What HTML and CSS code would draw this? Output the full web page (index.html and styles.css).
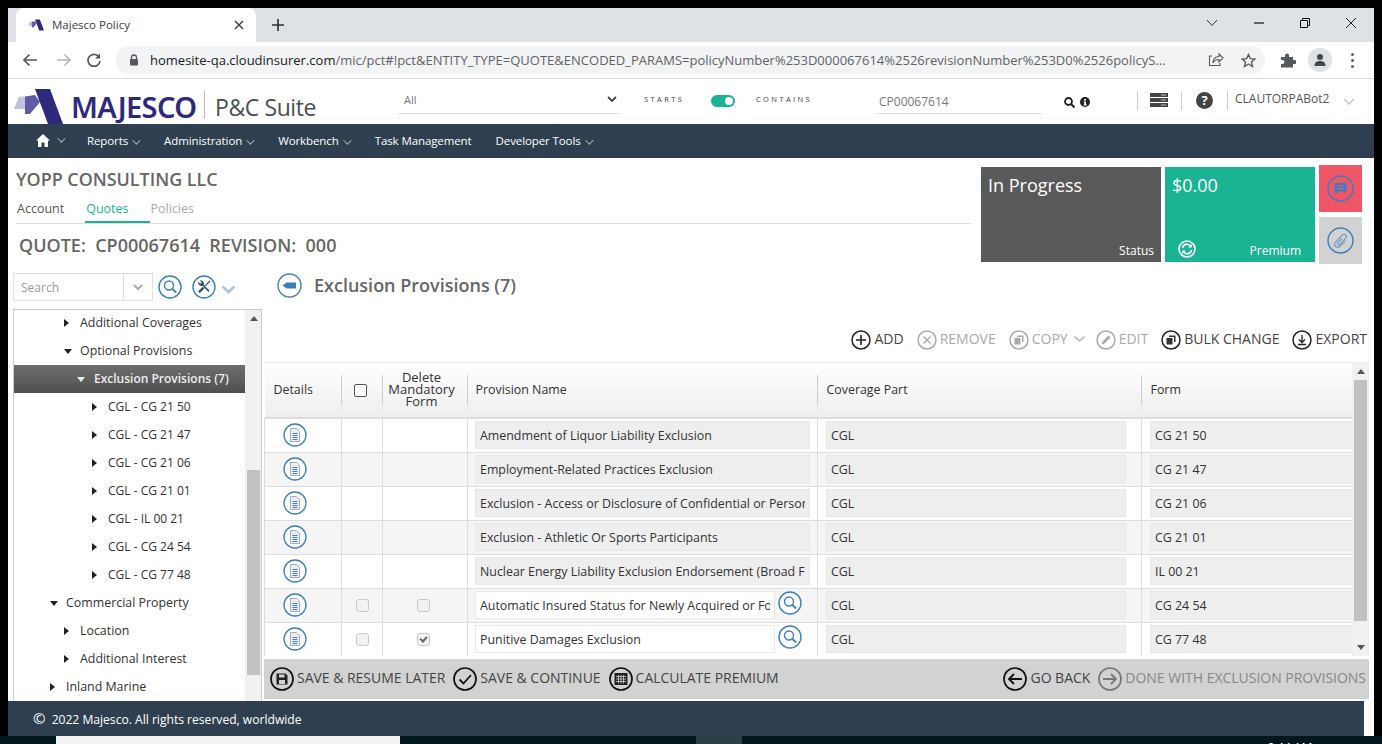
FILE: index.html
```html
<!DOCTYPE html>
<html lang="en">
<head>
  <meta charset="UTF-8" />
  <title>Majesco Policy</title>
  <link rel="stylesheet" href="styles.css">
</head>
<body>
  <svg class="sprites" width="0" height="0">
    <symbol id="mark" viewBox="0 0 50 35">
      <path d="M1 20 L6 7.5 H13 L14 20 Z" fill="#c3c1de"/>
      <path d="M12 7.5 L22 6 L27 13 L17 25 H12 Z" fill="#5f5ba6"/>
      <path d="M22 0 H37 L50 35 H35 Z" fill="#2d2a7e"/>
    </symbol>
    <symbol id="doc" viewBox="0 0 24 24">
      <circle cx="12" cy="12" r="11" fill="#fff" stroke="#3d7ebd" stroke-width="1.3"/>
      <path d="M7.5 5.5 H13.5 L16.5 8.5 V18.5 H7.5 Z" fill="#e8eef6" stroke="#a8a8c8" stroke-width="1"/>
      <path d="M9.5 10.5 H14.5 M9.5 12.5 H14.5 M9.5 14.5 H14.5 M9.5 16.5 H14.5" stroke="#4e80b8" stroke-width="1"/>
    </symbol>
    <symbol id="find" viewBox="0 0 24 24">
      <circle cx="12" cy="12" r="11" fill="#fff" stroke="#3d7ebd" stroke-width="1.4"/>
      <circle cx="11" cy="10.5" r="4.5" fill="none" stroke="#3d7ebd" stroke-width="1.4"/>
      <path d="M14.5 14 L18 17.5" stroke="#3d7ebd" stroke-width="1.8"/>
    </symbol>
  </svg>

  <div class="window">
    <div class="tabstrip">
      <div class="tab">
        <svg class="favicon" width="16" height="14"><use href="#mark"/></svg>
        <span class="tab-title">Majesco Policy</span>
        <svg class="tab-close" width="10" height="10" viewBox="0 0 10 10"><path d="M1 1 L9 9 M9 1 L1 9" stroke="#3c4043" stroke-width="1.4"/></svg>
      </div>
      <svg class="tab-new" width="12" height="12" viewBox="0 0 12 12"><path d="M6 0 V12 M0 6 H12" stroke="#2b2d30" stroke-width="1.6"/></svg>
      <div class="win-buttons">
        <svg width="12" height="8" viewBox="0 0 12 8"><path d="M1 1 L6 6.5 L11 1" fill="none" stroke="#333" stroke-width="1"/></svg>
        <svg width="12" height="2" viewBox="0 0 12 2"><path d="M1 1 H11" stroke="#111" stroke-width="1.2"/></svg>
        <svg width="10" height="10" viewBox="0 0 10 10"><path d="M0.5 2.5 H7.5 V9.5 H0.5 Z M2.5 2.5 V0.5 H9.5 V7.5 H7.5" fill="none" stroke="#111" stroke-width="1"/></svg>
        <svg width="12" height="12" viewBox="0 0 12 12"><path d="M1 1 L11 11 M11 1 L1 11" stroke="#222" stroke-width="1"/></svg>
      </div>
    </div>

    <div class="toolbar">
      <svg class="nav-ic" width="16" height="14" viewBox="0 0 16 14"><path d="M15 7 H2 M7.5 1.5 L2 7 L7.5 12.5" fill="none" stroke="#55585c" stroke-width="1.7"/></svg>
      <svg class="nav-ic" width="16" height="14" viewBox="0 0 16 14"><path d="M1 7 H14 M8.5 1.5 L14 7 L8.5 12.5" fill="none" stroke="#b4b7bb" stroke-width="1.7"/></svg>
      <svg class="nav-ic" width="14" height="14" viewBox="0 0 14 14"><path d="M12 4 A6 6 0 1 0 13 8" fill="none" stroke="#55585c" stroke-width="1.7"/><path d="M13 0.5 V5.5 H8 Z" fill="#55585c"/></svg>
      <div class="omnibox">
        <svg width="10" height="12" viewBox="0 0 10 12"><path d="M2.5 5 V3.5 A2.5 2.5 0 0 1 7.5 3.5 V5" fill="none" stroke="#55585c" stroke-width="1.3"/><rect x="1" y="5" width="8" height="6.5" rx="1" fill="#55585c"/></svg>
        <span class="url">homesite-qa.cloudinsurer.com<span class="url-dim">/mic/pct#!pct&amp;ENTITY_TYPE=QUOTE&amp;ENCODED_PARAMS=policyNumber%253D000067614%2526revisionNumber%253D0%2526policyS...</span></span>
        <svg class="share" width="16" height="14" viewBox="0 0 16 14"><path d="M11 1 L15 5 L11 9 V6.5 C8 6.5 6 7.5 5 10 C5 6 7.5 3.7 11 3.5 Z M4 3 H1.5 V12.5 H12 V10" fill="none" stroke="#55585c" stroke-width="1.1"/></svg>
        <svg width="15" height="15" viewBox="0 0 16 16"><path d="M8 1.5 L10 6 L14.8 6.4 L11.1 9.6 L12.3 14.4 L8 11.8 L3.7 14.4 L4.9 9.6 L1.2 6.4 L6 6 Z" fill="none" stroke="#55585c" stroke-width="1.4"/></svg>
      </div>
      <svg class="puzzle" width="16" height="16" viewBox="0 0 16 16"><path d="M1 5 H5 V3.5 A2 2 0 0 1 9 3.5 V5 H13 V8 H14.5 A2 2 0 0 1 14.5 12 H13 V15.5 H1 V12 H2.5 A2 2 0 0 0 2.5 8 H1 Z" fill="#55585c"/></svg>
      <div class="avatar"><svg width="14" height="14" viewBox="0 0 14 14"><circle cx="7" cy="4" r="3" fill="#44484e"/><path d="M1.5 13 C1.5 9 4 8 7 8 C10 8 12.5 9 12.5 13 Z" fill="#44484e"/></svg></div>
      <div class="kebab"><i></i><i></i><i></i></div>
    </div>

    <header class="app-head">
      <svg class="logo-mark" width="50" height="35"><use href="#mark"/></svg>
      <span class="logo-word">MAJESCO</span>
      <span class="logo-suite">P&amp;C Suite</span>
      <div class="head-select">
        <span>All</span>
        <svg width="10" height="7" viewBox="0 0 10 7"><path d="M1 1 L5 5 L9 1" fill="none" stroke="#444" stroke-width="1.8"/></svg>
      </div>
      <span class="micro micro-starts">STARTS</span>
      <span class="switch"><i></i></span>
      <span class="micro micro-contains">CONTAINS</span>
      <div class="head-search">CP00067614</div>
      <svg class="q-ic" width="11" height="11" viewBox="0 0 11 11"><circle cx="4.5" cy="4.5" r="3.5" fill="none" stroke="#222" stroke-width="1.8"/><path d="M7 7 L10.5 10.5" stroke="#222" stroke-width="2"/></svg>
      <svg class="i-ic" width="10" height="10" viewBox="0 0 10 10"><circle cx="5" cy="5" r="5" fill="#222"/><path d="M4 2 H6 V3.5 H4 Z M3.5 4.5 H6 V7.5 H6.8 V8.5 H3.5 V7.5 H4.3 V5.5 H3.5 Z" fill="#fff"/></svg>
      <span class="head-rule rule-a"></span>
      <svg class="server" width="18" height="14" viewBox="0 0 18 14"><path d="M0 0 H18 V4 H0 Z M0 5 H18 V9 H0 Z M0 10 H18 V14 H0 Z" fill="#444"/><path d="M11 2 H16 M11 7 H16 M11 12 H16" stroke="#bbb" stroke-width="1"/></svg>
      <span class="head-rule rule-b"></span>
      <span class="help">?</span>
      <span class="head-rule rule-c"></span>
      <span class="user">CLAUTORPABot2</span>
      <svg class="user-caret" width="12" height="7" viewBox="0 0 12 7"><path d="M1 1 L6 6 L11 1" fill="none" stroke="#c9c9c9" stroke-width="1.6"/></svg>
    </header>

    <nav class="main-nav">
      <svg class="home" width="14" height="13" viewBox="0 0 14 13"><path d="M7 0 L14 6.5 H12 V13 H8.5 V8.5 H5.5 V13 H2 V6.5 H0 Z" fill="#fff"/></svg>
      <span class="caret caret-home"></span>
      <a>Reports<span class="caret"></span></a>
      <a>Administration<span class="caret"></span></a>
      <a>Workbench<span class="caret"></span></a>
      <a>Task Management</a>
      <a>Developer Tools<span class="caret"></span></a>
    </nav>

    <section class="top">
      <div class="top-left">
        <div class="company">YOPP CONSULTING LLC</div>
        <div class="tabs">
          <a>Account</a>
          <a class="on">Quotes</a>
          <a class="off">Policies</a>
        </div>
        <div class="quote">QUOTE:&nbsp; CP00067614&nbsp; REVISION:&nbsp; 000</div>
      </div>
      <div class="tile tile-status">
        <div class="tile-big">In Progress</div>
        <div class="tile-foot"><span>Status</span></div>
      </div>
      <div class="tile tile-premium">
        <div class="tile-big">$0.00</div>
        <div class="tile-foot">
          <svg width="18" height="18" viewBox="0 0 18 18"><circle cx="9" cy="9" r="8" fill="none" stroke="#fff" stroke-width="1.6"/><path d="M4.5 8 A4.5 4.5 0 0 1 12.5 6 M13.5 10 A4.5 4.5 0 0 1 5.5 12" fill="none" stroke="#fff" stroke-width="1.6"/><path d="M13.8 3.8 V7.6 H10 Z M4.2 14.2 V10.4 H8 Z" fill="#fff"/></svg>
          <span>Premium</span>
        </div>
      </div>
      <div class="side-btns">
        <div class="side-btn side-red">
          <svg width="27" height="27" viewBox="0 0 27 27"><circle cx="13.5" cy="13.5" r="12.5" fill="none" stroke="#3d7ebd" stroke-width="1.4"/><path d="M7.5 8 H19.5 V16.5 H11.5 L8.5 19.5 V16.5 H7.5 Z" fill="#3d7ebd"/><path d="M10 10.7 H17 M10 13.5 H17" stroke="#ef5666" stroke-width="1.1"/></svg>
        </div>
        <div class="side-btn side-grey">
          <svg width="27" height="27" viewBox="0 0 27 27"><circle cx="13.5" cy="13.5" r="12.5" fill="none" stroke="#3d7ebd" stroke-width="1.4"/><path d="M15 11.5 L10.8 16 C9.6 17.4 11.4 19 12.6 17.8 L18.6 11.4 C20.8 8.8 17.6 5.8 15.2 8.2 L8.6 15 C5.8 18.4 10 22.4 13.2 19.2 L18.5 13.8" fill="none" stroke="#6f94c0" stroke-width="1.1"/></svg>
        </div>
      </div>
    </section>

    <section class="work">
      <aside class="side">
        <div class="side-tools">
          <div class="side-search">
            <span>Search</span>
            <svg width="10" height="7" viewBox="0 0 10 7"><path d="M1 1 L5 5 L9 1" fill="none" stroke="#aaa" stroke-width="2"/></svg>
          </div>
          <svg class="find" width="24" height="24"><use href="#find"/></svg>
          <svg width="24" height="24" viewBox="0 0 24 24"><circle cx="12" cy="12" r="11" fill="#fff" stroke="#3d7ebd" stroke-width="1.4"/><path d="M6 6.8 A3.6 3.6 0 0 0 10.6 10.8 L16.4 17 L17.6 15.8 L11.8 9.8 A3.6 3.6 0 0 0 7.8 5.2 L9.6 7.4 L8.2 8.8 Z" fill="#27506f"/><path d="M18 6 L13.4 10.6" stroke="#27506f" stroke-width="1.2"/><path d="M11.6 12.6 L7 17.2" stroke="#27506f" stroke-width="2.4"/></svg>
          <svg class="tools-caret" width="15" height="9" viewBox="0 0 15 9"><path d="M1.5 1.5 L7.5 7 L13.5 1.5" fill="none" stroke="#a9c4dc" stroke-width="2.6"/></svg>
        </div>
        <div class="tree-box">
          <ul class="tree">
            <li class="l2 closed">Additional Coverages</li>
            <li class="l2 open">Optional Provisions</li>
            <li class="l3 open sel">Exclusion Provisions (7)</li>
            <li class="l4 closed">CGL - CG 21 50</li>
            <li class="l4 closed">CGL - CG 21 47</li>
            <li class="l4 closed">CGL - CG 21 06</li>
            <li class="l4 closed">CGL - CG 21 01</li>
            <li class="l4 closed">CGL - IL 00 21</li>
            <li class="l4 closed">CGL - CG 24 54</li>
            <li class="l4 closed">CGL - CG 77 48</li>
            <li class="l1 open">Commercial Property</li>
            <li class="l2 closed">Location</li>
            <li class="l2 closed">Additional Interest</li>
            <li class="l1 closed">Inland Marine</li>
          </ul>
          <div class="sbar sbar-tree"><b class="up"></b><i></i><b class="down"></b></div>
        </div>
      </aside>

      <main class="pane">
        <div class="pane-title">
          <svg width="25" height="25" viewBox="0 0 25 25"><circle cx="12.5" cy="12.5" r="11.5" fill="#fff" stroke="#3d7ebd" stroke-width="1.4"/><path d="M5.5 12.5 L9.5 9.5 H19 V15.5 H9.5 Z" fill="#3d7ebd"/></svg>
          <h1>Exclusion Provisions (7)</h1>
        </div>
        <div class="actions">
          <a><svg width="20" height="20" viewBox="0 0 20 20"><circle cx="10" cy="10" r="9" fill="none" stroke="#222" stroke-width="1.5"/><path d="M10 5 V15 M5 10 H15" stroke="#222" stroke-width="1.6"/></svg>ADD</a>
          <a class="dim"><svg width="20" height="20" viewBox="0 0 20 20"><circle cx="10" cy="10" r="9" fill="none" stroke="#aaa" stroke-width="1.5"/><path d="M6.5 6.5 L13.5 13.5 M13.5 6.5 L6.5 13.5" stroke="#aaa" stroke-width="1.4"/></svg>REMOVE</a>
          <a class="dim"><svg width="20" height="20" viewBox="0 0 20 20"><circle cx="10" cy="10" r="9" fill="none" stroke="#aaa" stroke-width="1.5"/><path d="M8 5.5 H14.5 V12 H13 V7 H8 Z M5.5 8 H11.5 V14.5 H5.5 Z" fill="#aaa"/></svg>COPY<svg class="copy-caret" width="13" height="8" viewBox="0 0 13 8"><path d="M1.5 1.5 L6.5 6 L11.5 1.5" fill="none" stroke="#c4c4c4" stroke-width="2"/></svg></a>
          <a class="dim"><svg width="20" height="20" viewBox="0 0 20 20"><circle cx="10" cy="10" r="9" fill="none" stroke="#aaa" stroke-width="1.5"/><path d="M5.5 14.5 L6.5 11.5 L12.5 5.5 L14.5 7.5 L8.5 13.5 Z" fill="#aaa"/></svg>EDIT</a>
          <a><svg width="20" height="20" viewBox="0 0 20 20"><circle cx="10" cy="10" r="9" fill="none" stroke="#222" stroke-width="1.5"/><path d="M8 5.5 H14.5 V12 H13 V7 H8 Z M5.5 8 H11.5 V14.5 H5.5 Z" fill="#333"/></svg>BULK CHANGE</a>
          <a><svg width="20" height="20" viewBox="0 0 20 20"><circle cx="10" cy="10" r="9" fill="none" stroke="#222" stroke-width="1.5"/><path d="M10 5 V12 M7 9.5 L10 12.5 L13 9.5 M6 14.5 H14" fill="none" stroke="#222" stroke-width="1.3"/></svg>EXPORT</a>
        </div>

        <div class="grid-wrap">
          <div class="grid-body">
            <table class="grid">
              <colgroup>
                <col class="c-details"><col class="c-check"><col class="c-del"><col class="c-name"><col class="c-cov"><col class="c-form">
              </colgroup>
              <thead>
                <tr>
                  <th><span>Details</span></th>
                  <th class="mid head-check"><input type="checkbox"></th>
                  <th class="mid tight"><span>Delete Mandatory Form</span></th>
                  <th class="head-name"><span>Provision Name</span></th>
                  <th><span>Coverage Part</span></th>
                  <th><span>Form</span></th>
                </tr>
              </thead>
              <tbody>
                <tr>
                  <td class="mid"><svg width="24" height="24"><use href="#doc"/></svg></td><td></td><td></td>
                  <td><div class="fld">Amendment of Liquor Liability Exclusion</div></td>
                  <td><div class="fld">CGL</div></td><td><div class="fld">CG 21 50</div></td>
                </tr>
                <tr>
                  <td class="mid"><svg width="24" height="24"><use href="#doc"/></svg></td><td></td><td></td>
                  <td><div class="fld">Employment-Related Practices Exclusion</div></td>
                  <td><div class="fld">CGL</div></td><td><div class="fld">CG 21 47</div></td>
                </tr>
                <tr>
                  <td class="mid"><svg width="24" height="24"><use href="#doc"/></svg></td><td></td><td></td>
                  <td><div class="fld">Exclusion - Access or Disclosure of Confidential or Personal Information</div></td>
                  <td><div class="fld">CGL</div></td><td><div class="fld">CG 21 06</div></td>
                </tr>
                <tr>
                  <td class="mid"><svg width="24" height="24"><use href="#doc"/></svg></td><td></td><td></td>
                  <td><div class="fld">Exclusion - Athletic Or Sports Participants</div></td>
                  <td><div class="fld">CGL</div></td><td><div class="fld">CG 21 01</div></td>
                </tr>
                <tr>
                  <td class="mid"><svg width="24" height="24"><use href="#doc"/></svg></td><td></td><td></td>
                  <td><div class="fld">Nuclear Energy Liability Exclusion Endorsement (Broad Form)</div></td>
                  <td><div class="fld">CGL</div></td><td><div class="fld">IL 00 21</div></td>
                </tr>
                <tr>
                  <td class="mid"><svg width="24" height="24"><use href="#doc"/></svg></td>
                  <td class="mid"><input type="checkbox" disabled></td>
                  <td class="mid del-check"><input type="checkbox" disabled></td>
                  <td><div class="fld-row"><div class="fld white">Automatic Insured Status for Newly Acquired or Formed Organizations</div><svg width="24" height="24"><use href="#find"/></svg></div></td>
                  <td><div class="fld">CGL</div></td><td><div class="fld">CG 24 54</div></td>
                </tr>
                <tr>
                  <td class="mid"><svg width="24" height="24"><use href="#doc"/></svg></td>
                  <td class="mid"><input type="checkbox" disabled></td>
                  <td class="mid del-check"><input type="checkbox" checked disabled></td>
                  <td><div class="fld-row"><div class="fld white">Punitive Damages Exclusion</div><svg width="24" height="24"><use href="#find"/></svg></div></td>
                  <td><div class="fld">CGL</div></td><td><div class="fld">CG 77 48</div></td>
                </tr>
              </tbody>
            </table>
          </div>
          <div class="sbar sbar-grid"><b class="up"></b><i></i><b class="down"></b></div>
        </div>

        <div class="bottom-bar">
          <a><svg width="24" height="24" viewBox="0 0 24 24"><circle cx="12" cy="12" r="11" fill="none" stroke="#111" stroke-width="1.7"/><path d="M6.5 6.5 H15.5 L17.5 8.5 V17.5 H6.5 Z" fill="#222"/><path d="M9 7.5 H14.5 V10.5 H9 Z M9 13 H15 V17 H9 Z" fill="#d2d2d2"/></svg>SAVE &amp; RESUME LATER</a>
          <a><svg width="24" height="24" viewBox="0 0 24 24"><circle cx="12" cy="12" r="11" fill="none" stroke="#111" stroke-width="1.7"/><path d="M6.5 12.5 L10.5 16.5 L18 8" fill="none" stroke="#111" stroke-width="1.8"/></svg>SAVE &amp; CONTINUE</a>
          <a><svg width="24" height="24" viewBox="0 0 24 24"><circle cx="12" cy="12" r="11" fill="none" stroke="#111" stroke-width="1.7"/><rect x="5.5" y="6" width="13" height="12" fill="#222"/><path d="M7 9.5 H17 M7 12 H17 M7 14.5 H17 M9.5 8 V16.5 M12 8 V16.5 M14.5 8 V16.5" stroke="#d2d2d2" stroke-width="0.8"/></svg>CALCULATE PREMIUM</a>
          <span class="bar-gap"></span>
          <a><svg width="24" height="24" viewBox="0 0 24 24"><circle cx="12" cy="12" r="11" fill="none" stroke="#111" stroke-width="1.7"/><path d="M19 12 H6 M11 7 L6 12 L11 17" fill="none" stroke="#111" stroke-width="1.8"/></svg>GO BACK</a>
          <a class="dim"><svg width="24" height="24" viewBox="0 0 24 24"><circle cx="12" cy="12" r="11" fill="none" stroke="#777" stroke-width="1.7"/><path d="M5 12 H18 M13 7 L18 12 L13 17" fill="none" stroke="#777" stroke-width="1.8"/></svg>DONE WITH EXCLUSION PROVISIONS</a>
        </div>
      </main>
    </section>

    <footer class="foot"><span class="copy-sign">©</span> 2022 Majesco. All rights reserved, worldwide</footer>
  </div>

  <div class="taskbar"><i class="tb-white"></i><i class="tb-btn"></i><span class="tb-clock">6:44 AM</span></div>
</body>
</html>
```

FILE: styles.css
```css
html, body {
  margin: 0;
  padding: 0;
  height: 100%;
  background: #000;
  font-family: "Open Sans", sans-serif;
  overflow: hidden;
}
*, *::before, *::after {
  box-sizing: border-box;
}
.sprites {
  position: absolute;
}
svg {
  flex: none;
  display: block;
}

/* browser window */
.window {
  width: 1366px;
  height: 728px;
  margin: 8px 0 0 8px;
  background: #fff;
  display: flex;
  flex-direction: column;
  overflow: hidden;
}
.tabstrip {
  height: 34px;
  background: #dee1e6;
  display: flex;
  align-items: center;
  padding-left: 8px;
}
.tab {
  width: 240px;
  height: 34px;
  background: #fff;
  border-radius: 8px 8px 0 0;
  display: flex;
  align-items: center;
  padding-left: 12px;
}
.tab-title {
  margin: -2px 0 0 8px;
  font-size: 11.5px;
  color: #3c4043;
  width: 182px;
}
.tab-new {
  margin-left: 16px;
}
.win-buttons {
  margin-left: auto;
  display: flex;
  align-items: center;
  gap: 35px;
  padding-right: 17px;
  height: 100%;
  padding-bottom: 4px;
}
.toolbar {
  height: 37px;
  border-bottom: 1px solid #dadce0;
  display: flex;
  align-items: center;
  padding-left: 14px;
  background: #fff;
}
.nav-ic {
  margin-right: 18px;
}
.nav-ic + .nav-ic + .nav-ic {
  margin-right: 0;
  margin-left: -3px;
}
.omnibox {
  width: 1149px;
  height: 28px;
  margin-left: 15px;
  background: #f1f3f4;
  border-radius: 14px;
  display: flex;
  align-items: center;
  padding: 0 9px 0 13px;
}
.url {
  margin-left: 11px;
  width: 1058px;
  font-size: 13px;
  color: #202124;
  white-space: nowrap;
  overflow: hidden;
}
.url-dim {
  color: #5f6368;
}
.share {
  margin-right: 17px;
}
.puzzle {
  margin-left: 15px;
}
.avatar {
  width: 24px;
  height: 24px;
  margin-left: 12px;
  border-radius: 50%;
  background: #dee1e6;
  display: flex;
  align-items: center;
  justify-content: center;
}
.kebab {
  margin-left: 19px;
  display: flex;
  flex-direction: column;
  gap: 3px;
}
.kebab i {
  width: 3px;
  height: 3px;
  border-radius: 50%;
  background: #5f6368;
}

/* app header */
.app-head {
  height: 45px;
  position: relative;
  background: #fff;
}
.logo-mark {
  position: absolute;
  left: 5px;
  top: 10px;
}
.logo-word {
  position: absolute;
  left: 63px;
  top: 6px;
  font-size: 29px;
  font-family: "Noto Sans", "Open Sans", sans-serif;
  font-weight: 600;
  letter-spacing: -0.6px;
  color: #2d2a7e;
  line-height: 44px;
}
.logo-suite {
  position: absolute;
  left: 196px;
  top: 12px;
  padding-left: 10px;
  height: 28px;
  line-height: 32px;
  border-left: 1px solid #bbb;
  font-size: 23px;
  letter-spacing: -0.4px;
  color: #4a4f55;
}
.head-select {
  position: absolute;
  left: 389px;
  top: 10px;
  width: 224px;
  height: 25px;
  border-bottom: 1px solid #e2e2e2;
  display: flex;
  justify-content: space-between;
  align-items: center;
  padding: 0 4px 4px 7px;
  font-size: 11px;
  color: #777;
}
.micro {
  position: absolute;
  top: 15px;
  font-size: 7.5px;
  letter-spacing: 2.4px;
  color: #444;
}
.micro-starts {
  left: 636px;
}
.micro-contains {
  left: 748px;
}
.switch {
  position: absolute;
  left: 703px;
  top: 16px;
  width: 24px;
  height: 12px;
  border-radius: 6px;
  background: #1ab394;
}
.switch i {
  position: absolute;
  right: 2px;
  top: 2px;
  width: 8px;
  height: 8px;
  border-radius: 50%;
  background: #fff;
}
.head-search {
  position: absolute;
  left: 867px;
  top: 10px;
  width: 168px;
  height: 25px;
  border-bottom: 1px solid #e2e2e2;
  padding: 4px 4px;
  font-size: 12px;
  color: #777;
}
.q-ic {
  position: absolute;
  left: 1056px;
  top: 18px;
}
.i-ic {
  position: absolute;
  left: 1072px;
  top: 18px;
}
.head-rule {
  position: absolute;
  top: 12px;
  width: 1px;
  height: 19px;
  background: #ccc;
}
.rule-a { left: 1129px; }
.rule-b { left: 1173px; }
.rule-c { left: 1219px; }
.server {
  position: absolute;
  left: 1142px;
  top: 14px;
}
.help {
  position: absolute;
  left: 1188px;
  top: 13px;
  width: 17px;
  height: 17px;
  border-radius: 50%;
  background: #444;
  color: #fff;
  font-size: 13px;
  font-weight: 700;
  line-height: 17px;
  text-align: center;
}
.user {
  position: absolute;
  left: 1227px;
  top: 11px;
  font-size: 12px;
  color: #555;
}
.user-caret {
  position: absolute;
  left: 1335px;
  top: 19px;
}

/* dark nav */
.main-nav {
  height: 34px;
  background: #2f3f4f;
  display: flex;
  align-items: center;
  padding: 0 0 2px 28px;
  color: #fff;
  font-size: 11.5px;
  letter-spacing: -0.1px;
}
.main-nav a {
  margin-right: 24px;
  white-space: nowrap;
}
.caret {
  display: inline-block;
  width: 6px;
  height: 6px;
  margin: 0 2px 0 4px;
  border-right: 1.5px solid #a8b2bc;
  border-bottom: 1.5px solid #a8b2bc;
  transform: rotate(45deg) translateY(-2px);
}
.caret-home {
  margin: 0 24px 0 7px;
}

/* account band */
.top {
  height: 107px;
  display: flex;
  flex: none;
  padding-top: 9px;
}
.top-left {
  width: 963px;
}
.company {
  padding-left: 8px;
  font-size: 17.9px;
  font-weight: 600;
  line-height: 24px;
  color: #666;
}
.tabs {
  margin-left: 8px;
  height: 33px;
  border-bottom: 1px solid #ddd;
  display: flex;
  font-size: 12.5px;
  color: #555;
}
.tabs a {
  height: 32px;
  padding: 9px 0 0 1px;
  margin-right: 21px;
}
.tabs .on {
  color: #1ab394;
  border-bottom: 2px solid #1ab394;
  padding-right: 21px;
  margin-right: 0;
}
.tabs .off {
  color: #aaa;
}
.quote {
  padding: 9px 0 0 11px;
  font-size: 18px;
  font-weight: 600;
  line-height: 24px;
  color: #666;
}
.tile {
  height: 95px;
  padding: 5px 7px 6px;
  color: #fff;
  display: flex;
  flex-direction: column;
  justify-content: space-between;
  margin-left: 10px;
}
.tile-status {
  width: 180px;
  background: #595959;
}
.tile-premium {
  width: 150px;
  background: #1ab394;
  margin-left: 4px;
}
.tile-big {
  font-size: 18px;
  line-height: 26px;
}
.tile-foot {
  display: flex;
  justify-content: flex-end;
  align-items: flex-end;
  font-size: 12px;
  line-height: 16px;
  margin-bottom: -3px;
}
.tile-premium .tile-foot svg {
  margin-bottom: 1px;
}
.tile-premium .tile-foot {
  justify-content: space-between;
  padding-left: 6px;
  margin-right: 7px;
}
.side-btns {
  margin: -2px 0 0 4px;
  display: flex;
  flex-direction: column;
  gap: 5px;
}
.side-btn {
  width: 43px;
  height: 47px;
  display: flex;
  align-items: center;
  justify-content: center;
}
.side-red {
  background: #ef5666;
}
.side-grey {
  background: #d2d2d2;
}

/* sidebar + pane */
.work {
  flex: 1;
  min-height: 0;
  display: flex;
  margin-top: 8px;
}
.side {
  width: 256px;
  flex: none;
  padding-left: 5px;
  display: flex;
  flex-direction: column;
}
.side-tools {
  height: 28px;
  display: flex;
  align-items: center;
  margin: 0 0 8px 0;
}
.side-search {
  width: 140px;
  height: 28px;
  border: 1px solid #e0e0e0;
  display: flex;
  align-items: center;
  justify-content: space-between;
  padding: 0 9px 0 7px;
  font-size: 12px;
  color: #999;
  background: linear-gradient(to right, transparent 109px, #e0e0e0 109px, #e0e0e0 110px, transparent 110px);
}
.find {
  margin: 0 10px 0 5px;
}
.tools-caret {
  margin: 4px 0 0 5px;
}
.tree-box {
  flex: 1;
  min-height: 0;
  width: 249px;
  border: 1px solid #ccc;
  border-bottom: none;
  display: flex;
  overflow: hidden;
}
.tree {
  list-style: none;
  margin: -1px 0 0;
  padding: 0;
  width: 231px;
  flex: none;
}
.tree li {
  height: 28px;
  line-height: 27px;
  font-size: 12.4px;
  color: #333;
  position: relative;
}
.tree li::before {
  content: "";
  position: absolute;
  top: 10px;
  border-style: solid;
}
.tree .closed::before {
  border-width: 4px 0 4px 5px;
  border-color: transparent transparent transparent #222;
}
.tree .open::before {
  top: 12px;
  border-width: 5px 4px 0 4px;
  border-color: #222 transparent transparent transparent;
}
.tree .l1 { padding-left: 52px; }
.tree .l2 { padding-left: 66px; }
.tree .l3 { padding-left: 80px; }
.tree .l4 { padding-left: 94px; font-size: 12px; }
.tree .l1::before { left: 36px; }
.tree .l2::before { left: 50px; }
.tree .l3::before { left: 63px; }
.tree .l4::before { left: 78px; }
.tree .sel {
  background: linear-gradient(to bottom, #6e6e6e, #4f4f4f);
  color: #eee;
  font-size: 12px;
  font-weight: 600;
}
.tree .sel::before {
  border-color: #eee transparent transparent transparent;
}

/* fake scrollbars */
.sbar {
  width: 17px;
  flex: none;
  background: #f1f1f1;
  display: flex;
  flex-direction: column;
  align-items: center;
}
.sbar b {
  height: 17px;
  flex: none;
  display: flex;
  align-items: center;
  justify-content: center;
}
.sbar b::before {
  content: "";
  border-style: solid;
  border-width: 0 4px 5px 4px;
  border-color: transparent transparent #555 transparent;
}
.sbar b.down::before {
  border-width: 5px 4px 0 4px;
  border-color: #555 transparent transparent transparent;
}
.sbar i {
  width: 13px;
  background: #c1c1c1;
  flex: none;
}
.sbar-tree i {
  margin-top: 143px;
  height: 205px;
}
.sbar-tree .down,
.sbar-grid .down {
  margin-top: auto;
}
.sbar-grid i {
  height: 241px;
}

.pane {
  flex: 1;
  min-width: 0;
  display: flex;
  flex-direction: column;
  padding-right: 5px;
}
.pane-title {
  height: 26px;
  margin-top: -1px;
  display: flex;
  align-items: center;
  padding-left: 13px;
  gap: 12px;
}
.pane-title h1 {
  margin: 0;
  font-size: 18px;
  font-weight: 600;
  color: #666;
}
.actions {
  height: 28px;
  margin-top: 28px;
  display: flex;
  justify-content: flex-end;
  align-items: center;
  gap: 13px;
  font-size: 14px;
  color: #444;
  padding-right: 2px;
}
.actions a {
  display: flex;
  align-items: center;
  gap: 3px;
  margin-bottom: 3px;
}
.actions a svg {
  margin-top: 3px;
}
.actions .dim {
  color: #aaa;
}
.actions .copy-caret {
  margin: 0 -3px 0 2px;
}

/* provisions grid */
.grid-wrap {
  height: 294px;
  margin-top: 8px;
  display: flex;
  border-top: 1px solid #eee;
  flex: none;
}
.grid-body {
  flex: 1;
  min-width: 0;
  overflow: hidden;
}
.grid {
  width: 1089px;
  table-layout: fixed;
  border-collapse: collapse;
  font-size: 12.4px;
  color: #333;
}
.c-details { width: 77px; }
.c-check { width: 41px; }
.c-del { width: 85px; }
.c-name { width: 350px; }
.c-cov { width: 324px; }
.c-form { width: 212px; }
.grid th {
  height: 55px;
  background: linear-gradient(to bottom, #fff, #eee);
  border-bottom: 2px solid #ddd;
  font-weight: 400;
  text-align: left;
  padding: 0 0 0 9px;
  line-height: 12px;
  position: relative;
}
.grid th::after {
  content: "";
  position: absolute;
  right: 0;
  top: 12px;
  bottom: 12px;
  width: 1px;
  background: #ccc;
}
.grid th:last-child::after {
  display: none;
}
.grid th.mid {
  text-align: center;
  padding: 0;
}
.grid th.tight {
  padding: 0 7px 2px 0;
  font-size: 13px;
}
.grid th.head-check {
  padding-right: 3px;
}
.grid th.head-name {
  padding-left: 8px;
}
.grid td {
  height: 34px;
  border: 1px solid #ddd;
  padding: 0 7px;
  vertical-align: middle;
}
.grid td:nth-child(5) {
  padding: 0 15px 0 8px;
}
.grid td:nth-child(6) {
  padding: 0 0 0 8px;
}
.grid td.mid {
  padding: 0;
}
.grid td.del-check {
  padding-right: 3px;
}
.grid td.mid svg {
  margin: 0 auto 0 18px;
}
.grid tbody tr:nth-child(even) td {
  background: #f5f5f5;
}
.grid input[type="checkbox"] {
  appearance: none;
  display: block;
  width: 13px;
  height: 13px;
  margin: 0 auto;
  border: 1px solid #555;
  border-radius: 2px;
  background: #fff;
  position: relative;
}
.grid input[type="checkbox"]:disabled {
  border-color: #c8c8c8;
  border-radius: 3px;
  background: #f2f2f2;
}
.grid input[type="checkbox"]:checked::after {
  content: "";
  position: absolute;
  left: 3px;
  top: 1px;
  width: 5px;
  height: 7px;
  border-right: 2px solid #666;
  border-bottom: 2px solid #666;
  transform: rotate(40deg);
}
.fld {
  height: 28px;
  line-height: 28px;
  padding: 0 4px;
  background: #eee;
  border: 1px solid #e8e8e8;
  white-space: nowrap;
  overflow: clip;
  overflow-clip-margin: content-box;
  color: #333;
}
.fld.white {
  background: #fff;
  flex: none;
  width: 300px;
}
.fld-row {
  display: flex;
  align-items: center;
  gap: 3px;
}
.fld-row svg {
  margin-bottom: 4px;
}

.bottom-bar {
  height: 40px;
  margin-top: 3px;
  background: #d2d2d2;
  display: flex;
  align-items: center;
  gap: 8px;
  padding: 0 3px 0 6px;
  font-size: 14px;
  color: #444;
  letter-spacing: -0.02px;
  flex: none;
}
.bottom-bar a {
  display: flex;
  align-items: center;
  gap: 3px;
  white-space: nowrap;
  margin-bottom: 4px;
}
.bottom-bar a svg {
  margin-top: 4px;
}
.bottom-bar .dim {
  color: #888;
}
.bar-gap {
  flex: 1;
}

.foot {
  position: absolute;
  left: 8px;
  top: 701px;
  width: 1356px;
  height: 35px;
  background: #2f3f4f;
  color: #fff;
  font-size: 12.1px;
  line-height: 34px;
  padding-left: 25px;
}
.copy-sign {
  font-size: 15px;
  margin-right: 3px;
}

.taskbar {
  height: 8px;
  background: #03171f;
  display: flex;
  overflow: hidden;
}
.tb-white {
  width: 344px;
  margin-left: 56px;
  background: #f2f2f2;
}
.tb-btn {
  width: 46px;
  margin-left: 296px;
  background: #2b3f46;
}
.tb-clock {
  margin: 4px 0 0 525px;
  font-size: 12px;
  line-height: 16px;
  color: #fff;
  white-space: nowrap;
}
```
